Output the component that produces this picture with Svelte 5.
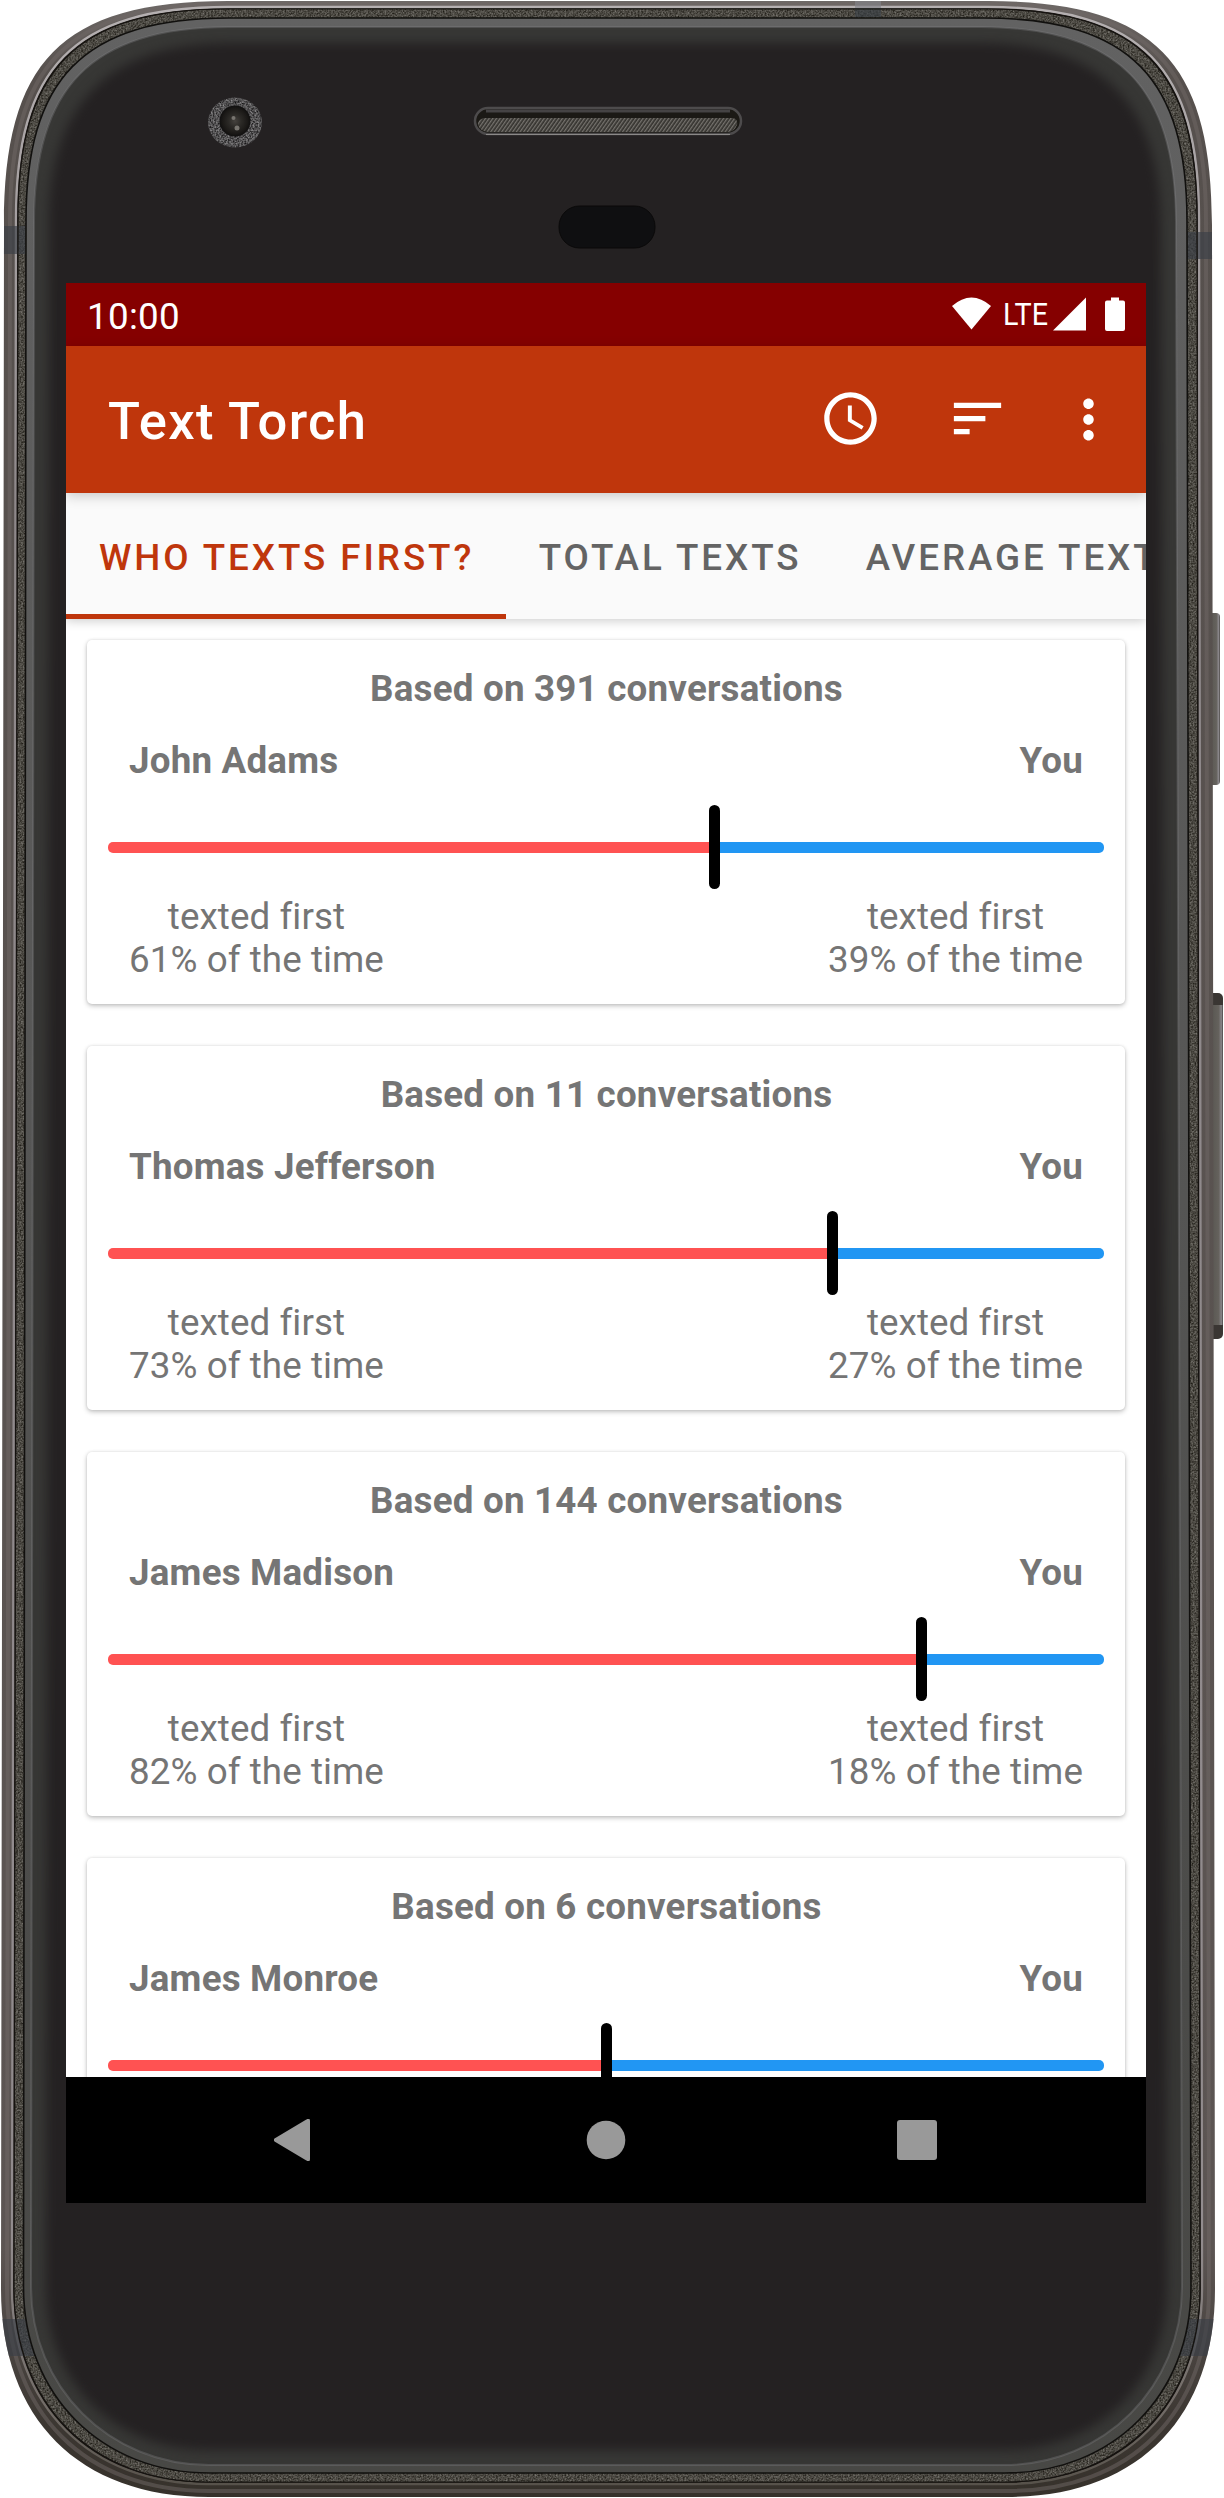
<script>
  const tabs = ['Who texts first?', 'Total texts', 'Average text length'];

  const people = [
    { name: 'John Adams', conversations: 391, share: 61 },
    { name: 'Thomas Jefferson', conversations: 11, share: 73 },
    { name: 'James Madison', conversations: 144, share: 82 },
    { name: 'James Monroe', conversations: 6, share: 50 }
  ];

  // Closed outline of the phone body. The top edge is slightly narrower than
  // the bottom one; `e` and `f` are the top and bottom corner extents.
  function outline(tl, bl, t, tr, br, b, e = 224, f = 208, c = 62, d = 78) {
    return [
      `M${tl} ${t + e}`,
      `C${tl} ${t + c} ${tl + c - 6} ${t} ${tl + e} ${t}`,
      `L${tr - e} ${t}`,
      `C${tr - c + 6} ${t} ${tr} ${t + c} ${tr} ${t + e}`,
      `L${br} ${b - f}`,
      `C${br} ${b - d} ${br - d} ${b} ${br - f} ${b}`,
      `L${bl + f} ${b}`,
      `C${bl + d} ${b} ${bl} ${b - d} ${bl} ${b - f}`,
      'Z'
    ].join(' ');
  }

  const shell = outline(4, 1, 1, 1212, 1215, 2497);
  const shade = outline(10, 7, 4, 1206, 1209, 2491, 218, 202);
  const shine = outline(16, 12, 7, 1199, 1202, 2484, 212, 196);
  const speckle = outline(18, 14, 9, 1197, 1200, 2482, 210, 194);
  const rim = outline(26, 23.5, 18, 1187, 1191, 2473, 203, 186);
  const glass = outline(34, 31, 27, 1176, 1182, 2465, 195, 178);
  const face = outline(49, 46, 43, 1161, 1167, 2450, 180, 163, 64, 68);
</script>

<div class="device">
  <svg class="body" viewBox="0 0 1224 2498" aria-hidden="true">
    <defs>
      <clipPath id="shellClip"><path d={shell} /></clipPath>
      <clipPath id="glassClip"><path d={glass} /></clipPath>
      <clipPath id="speckleClip"><path d={speckle} /></clipPath>
      <filter id="soft" x="-5%" y="-5%" width="110%" height="110%" color-interpolation-filters="sRGB"><feGaussianBlur stdDeviation="5.500" /></filter>
      <filter id="grain" x="0" y="0" width="100%" height="100%" color-interpolation-filters="sRGB">
        <feTurbulence type="fractalNoise" baseFrequency="0.6" numOctaves="2" seed="4" />
        <feColorMatrix values="0.5 0 0 0 0.045  0.5 0 0 0 0.035  0.5 0 0 0 0.01  0 0 0 0 1" />
      </filter>
      <filter id="cameraGrain" x="0" y="0" width="100%" height="100%" color-interpolation-filters="sRGB">
        <feTurbulence type="fractalNoise" baseFrequency="0.6" numOctaves="2" seed="9" />
        <feColorMatrix values="0.7 0 0 0 -0.03  0.7 0 0 0 -0.035  0.7 0 0 0 -0.03  0 0 0 0 1" />
      </filter>
      <linearGradient id="rimFill" x1="0" y1="0" x2="0" y2="1">
        <stop offset="0" stop-color="#626262" />
        <stop offset="0.45" stop-color="#565655" />
        <stop offset="0.8" stop-color="#4b4b49" />
        <stop offset="1" stop-color="#484845" />
      </linearGradient>
      <linearGradient id="metal" x1="0" y1="0" x2="0" y2="1">
        <stop offset="0" stop-color="#6d6866" />
        <stop offset="0.03" stop-color="#56504d" />
        <stop offset="0.9" stop-color="#5c5553" />
        <stop offset="0.97" stop-color="#3c3732" />
        <stop offset="1" stop-color="#36312b" />
      </linearGradient>
      <linearGradient id="shineFill" x1="0" y1="0" x2="0" y2="1">
        <stop offset="0" stop-color="#b5b0b1" />
        <stop offset="0.2" stop-color="#8e888a" />
        <stop offset="0.9" stop-color="#928c8e" />
        <stop offset="0.97" stop-color="#716b66" />
        <stop offset="1" stop-color="#57524b" />
      </linearGradient>
      <linearGradient id="key" x1="0" y1="0" x2="1" y2="0">
        <stop offset="0" stop-color="#55534e" />
        <stop offset="0.7" stop-color="#65625d" />
        <stop offset="0.88" stop-color="#89868a" />
        <stop offset="1" stop-color="#4a4745" />
      </linearGradient>
      <pattern id="mesh" width="3" height="3" patternUnits="userSpaceOnUse" patternTransform="rotate(35)">
        <rect width="3" height="3" fill="#34322e" />
        <rect width="1.300" height="3" fill="#76736e" />
      </pattern>
      <radialGradient id="lens">
        <stop offset="0" stop-color="#45423e" />
        <stop offset="0.4" stop-color="#2c2a27" />
        <stop offset="0.8" stop-color="#1b1917" />
        <stop offset="1" stop-color="#100f0f" />
      </radialGradient>
      <clipPath id="cameraRing"><ellipse cx="235" cy="122.500" rx="27" ry="25" /></clipPath>
    </defs>

    <rect x="1208" y="613" width="12" height="172" rx="4" fill="url(#key)" />
    <rect x="1208" y="993" width="15" height="346" rx="5" fill="#3a3633" />
    <rect x="1209" y="1005" width="14" height="320" fill="url(#key)" />

    <path d={shell} fill="url(#metal)" />
    <path d={shade} fill="none" stroke="#6f6866" stroke-width="4" opacity="0.5" />
    <path d={shine} fill="#181512" stroke="url(#shineFill)" stroke-width="2.400" />
    <g clip-path="url(#speckleClip)">
      <rect width="1224" height="2498" filter="url(#grain)" />
    </g>
    <g clip-path="url(#shellClip)" class="bands">
      <rect x="0" y="226" width="26" height="28" />
      <rect x="1186" y="232" width="30" height="27" />
      <rect x="0" y="2319" width="34" height="37" />
      <rect x="1180" y="2319" width="44" height="37" />
      <rect x="855" y="0" width="26" height="8" class="light" />
      <rect x="855" y="8" width="26" height="9" />
    </g>
    <path d={speckle} fill="none" stroke="#15120f" stroke-width="1.200" />
    <path d={rim} fill="url(#rimFill)" stroke="#11100e" stroke-width="1.600" />
    <path d={glass} fill="#373735" stroke="#808084" stroke-opacity="0.35" stroke-width="2" />
    <g clip-path="url(#glassClip)"><path d={face} fill="#242122" filter="url(#soft)" /></g>

    <g clip-path="url(#cameraRing)">
      <rect x="205" y="95" width="60" height="55" filter="url(#cameraGrain)" />
    </g>
    <circle cx="235" cy="121" r="15.500" fill="url(#lens)" />
    <circle cx="233.500" cy="118" r="2" fill="#77746f" />
    <circle cx="237" cy="128" r="2.500" fill="#77746f" />

    <rect x="475" y="108" width="266" height="26" rx="13" fill="#1b1915" stroke="#4d4b4c" stroke-width="2.500" />
    <path d="M486 111H730" stroke="#454344" stroke-width="3" />
    <path d="M484 118H733Q738 119 737 125Q734 132 728 132H488Q480 131 478 125Q477 120 484 118Z" fill="url(#mesh)" />
    <path d="M486 134.500H730" stroke="#8b8988" stroke-width="1.200" />
    <rect x="559" y="206" width="96" height="42" rx="20.500" fill="#0f0f11" stroke="#0a0909" />
  </svg>

  <main class="screen">
    <header class="status">
      <time>10:00</time>
      <svg class="signals" viewBox="0 0 174 35" aria-hidden="true">
        <path d="M0 9Q19.500 -8 39 9L19.500 32.500Z" />
        <text x="51" y="28" textLength="45" lengthAdjust="spacingAndGlyphs">LTE</text>
        <path d="M101 33.500L134 0.500V33.500Z" />
        <path d="M159 0.500H167V3.500H171Q173 3.500 173 5.500V32Q173 34 171 34H155Q153 34 153 32V5.500Q153 3.500 155 3.500H159Z" />
      </svg>
    </header>

    <div class="appbar">
      <h1>Text Torch</h1>
      <svg class="icon clock" viewBox="0 0 24 24"><path d="M11.990 2C6.470 2 2 6.480 2 12s4.470 10 9.990 10C17.520 22 22 17.520 22 12S17.520 2 11.990 2zM12 20c-4.420 0-8-3.580-8-8s3.580-8 8-8 8 3.580 8 8-3.580 8-8 8zm.5-13H11v6l5.250 3.150.75-1.230-4.500-2.670z" /></svg>
      <svg class="icon sort" viewBox="0 0 24 24"><path d="M3 18h6v-2H3v2zM3 6v2h18V6H3zm0 7h12v-2H3v2z" /></svg>
      <svg class="icon more" viewBox="0 0 24 24"><path d="M12 8c1.100 0 2-.9 2-2s-.9-2-2-2-2 .9-2 2 .9 2 2 2zm0 2c-1.100 0-2 .9-2 2s.9 2 2 2 2-.9 2-2-.9-2-2-2zm0 6c-1.100 0-2 .9-2 2s.9 2 2 2 2-.9 2-2-.9-2-2-2z" /></svg>
    </div>

    <nav class="tabs">
      {#each tabs as tab, i}
        <span class="tab" class:active={i === 0}>{tab}</span>
      {/each}
    </nav>

    <section class="list">
      {#each people as p}
        <article class="card">
          <div class="basis">Based on {p.conversations} conversations</div>
          <div class="row names"><span>{p.name}</span><span>You</span></div>
          <div class="slider">
            <div class="fill" style:flex-grow={p.share}></div>
            <div class="thumb"></div>
            <div class="rest" style:flex-grow={100 - p.share}></div>
          </div>
          <div class="row shares">
            <span>texted first<br />{p.share}% of the time</span>
            <span>texted first<br />{100 - p.share}% of the time</span>
          </div>
        </article>
      {/each}
    </section>

    <footer class="navbar">
      <svg viewBox="0 0 42 42"><path d="M31.500 1Q36 -2 36 2V40Q36 44 31.500 41L0.500 22.500Q-1 21 0.500 19.500Z" /></svg>
      <svg viewBox="0 0 42 42"><circle cx="21" cy="21" r="19.300" /></svg>
      <svg viewBox="0 0 42 42"><rect x="1" y="1" width="40" height="40" rx="3" /></svg>
    </footer>
  </main>
</div>

<style>
  :global(body) {
    margin: 0;
    background: #fff;
  }

  .device {
    display: grid;
    width: 1224px;
    height: 2498px;
    font-family: Roboto, sans-serif;
    font-size: 36.75px;
    line-height: 43px;
    color: #757575;
  }

  .body,
  .screen {
    grid-area: 1 / 1;
  }

  .body {
    width: 1224px;
    height: 2498px;
  }

  .bands {
    fill: #3a3f46;
    opacity: 0.65;
  }

  .bands .light {
    fill: #85858a;
  }

  .screen {
    display: flex;
    flex-direction: column;
    z-index: 1;
    width: 1080px;
    height: 1920px;
    margin: 283px 0 0 66px;
    overflow: hidden;
    background: #fff;
  }

  .status {
    display: flex;
    flex: none;
    justify-content: space-between;
    align-items: flex-start;
    box-sizing: border-box;
    height: 63px;
    padding: 12px 20px 0 21px;
    background: #850000;
    color: #fff;
  }

  time {
    letter-spacing: 0.3px;
  }

  .signals {
    width: 174px;
    height: 35px;
    margin-top: 2px;
    fill: #fff;
  }

  .signals text {
    font-size: 32px;
  }

  .appbar {
    display: flex;
    flex: none;
    align-items: center;
    box-sizing: border-box;
    height: 147px;
    padding: 0 26px 0 42px;
    background: #bf360c;
    color: #fff;
    z-index: 3;
    box-shadow: 0 3px 12px rgba(0, 0, 0, 0.2);
  }

  h1 {
    flex: 1;
    margin: 0;
    padding-top: 3px;
    font-size: 52.5px;
    line-height: 62px;
    font-weight: 500;
    letter-spacing: 1.3px;
  }

  .icon {
    width: 63px;
    height: 63px;
    fill: #fff;
  }

  .clock,
  .sort {
    margin-bottom: 2px;
  }

  .clock {
    margin-right: 64px;
  }

  .sort {
    margin-right: 48px;
  }

  .tabs {
    display: flex;
    flex: none;
    height: 126px;
    background: #fafafa;
    z-index: 2;
    box-shadow: 0 2px 10px rgba(0, 0, 0, 0.2);
  }

  .tab {
    flex: none;
    box-sizing: border-box;
    height: 126px;
    padding: 43px 31.5px 0 32.9px;
    font-weight: 500;
    letter-spacing: 2.95px;
    text-transform: uppercase;
    white-space: nowrap;
    color: #646464;
  }

  .tab.active {
    border-bottom: 5px solid #bf360c;
    color: #bf360c;
  }

  .list {
    display: flex;
    flex: 1;
    flex-direction: column;
    gap: 42px;
    min-height: 0;
    padding: 21px 21px 0;
    overflow: hidden;
  }

  .card {
    flex: none;
    box-sizing: border-box;
    height: 364px;
    padding: 27px 21px 0;
    border-radius: 5px;
    background: #fff;
    box-shadow: 0 2px 5px rgba(0, 0, 0, 0.23), 0 0 3px rgba(0, 0, 0, 0.1);
  }

  .basis {
    padding-left: 1px;
    font-weight: 700;
    letter-spacing: 0.2px;
    text-align: center;
  }

  .row {
    display: flex;
    justify-content: space-between;
    padding: 0 21px;
  }

  .names {
    margin-top: 29px;
    font-weight: 700;
    letter-spacing: 0.2px;
  }

  .slider {
    display: flex;
    align-items: center;
    height: 84px;
    margin: 23px 0 6px;
  }

  .fill,
  .rest {
    flex-basis: 0;
    height: 11px;
  }

  .fill {
    border-radius: 5px 0 0 5px;
    background: #ff5252;
  }

  .thumb {
    flex: none;
    width: 11px;
    height: 84px;
    border-radius: 5.5px;
    background: #000;
  }

  .rest {
    border-radius: 0 5px 5px 0;
    background: #2196f3;
  }

  .shares {
    letter-spacing: 0.08px;
    text-align: center;
    font-variant-ligatures: common-ligatures;
  }

  .navbar {
    display: flex;
    flex: none;
    align-items: center;
    justify-content: center;
    gap: 269px;
    height: 126px;
    background: #000;
  }

  .navbar svg {
    width: 42px;
    height: 42px;
    fill: #999;
  }
</style>
